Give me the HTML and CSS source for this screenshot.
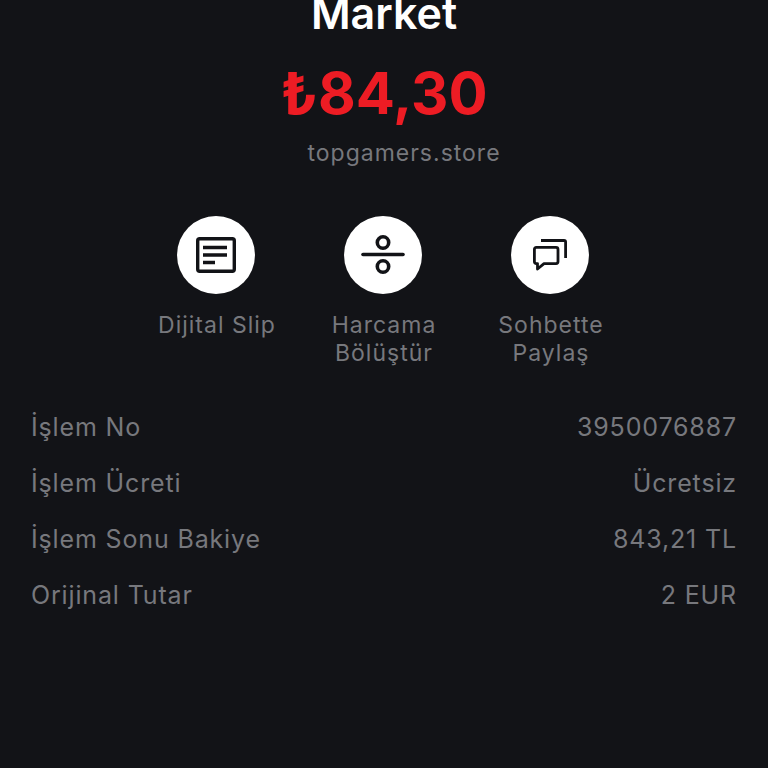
FILE: index.html
```html
<!DOCTYPE html>
<html lang="en">

<head>
    <meta charset="UTF-8">
    <meta name="viewport" content="width=device-width, initial-scale=1.0">
    <title>İşlem Detayı</title>
    <link rel="stylesheet" href="styles.css">
</head>

<body>

<div class="summary">
    <h1 class="title">Market</h1>
    <div class="amount">₺84,30</div>
    <div class="site">topgamers.store</div>
</div>

<div class="actions">
    <div class="action">
        <div class="circle">
            <svg width="40" height="36" viewBox="0 0 40 36" fill="none" stroke="#121317" stroke-width="3.4">
                <rect x="1.7" y="1.7" width="36.6" height="32.6" rx="2"/>
                <path d="M7 10.5H31M7 18H31M7 25.5H19"/>
            </svg>
        </div>
        <div class="label">Dijital Slip</div>
    </div>
    <div class="action">
        <div class="circle">
            <svg width="44" height="40" viewBox="0 0 44 40" fill="none" stroke="#121317" stroke-width="3.6">
                <circle cx="22" cy="7.5" r="5.7"/>
                <path d="M2 19.5H42" stroke-linecap="round"/>
                <circle cx="22" cy="31.5" r="5.7"/>
            </svg>
        </div>
        <div class="label">Harcama<br>Bölüştür</div>
    </div>
    <div class="action">
        <div class="circle">
            <svg width="34" height="32" viewBox="0 0 34 32" fill="none" stroke="#121317" stroke-width="2.8" stroke-linejoin="round">
                <path d="M8 1.5H31Q32.6 1.5 32.6 3V19"/>
                <path d="M3.4 8.4H23Q25 8.4 25 10.4V22.6Q25 24.6 23 24.6H11L4.5 30V24.6H3.4Q1.4 24.6 1.4 22.6V10.4Q1.4 8.4 3.4 8.4Z"/>
            </svg>
        </div>
        <div class="label">Sohbette<br>Paylaş</div>
    </div>
</div>

<div class="details">
    <div class="row"><span>İşlem No</span><span>3950076887</span></div>
    <div class="row"><span>İşlem Ücreti</span><span>Ücretsiz</span></div>
    <div class="row"><span>İşlem Sonu Bakiye</span><span>843,21 TL</span></div>
    <div class="row"><span>Orijinal Tutar</span><span>2 EUR</span></div>
</div>

</body>

</html>
```

FILE: styles.css
```css
html, body {
    margin: 0;
    padding: 0;
    height: 100%;
    overflow: hidden;
}

body {
    background-color: #121317;
    font-family: Inter, "Noto Sans", sans-serif;
    color: #77787d;
}

.summary {
    display: flex;
    flex-direction: column;
    align-items: center;
    margin-top: -12px;
}

.title {
    margin: 0;
    font-size: 43px;
    line-height: 50px;
    font-weight: 600;
    color: #ffffff;
}

.amount {
    margin-top: 24px;
    font-size: 58px;
    line-height: 62px;
    font-weight: 700;
    color: #ed1c24;
}

.site {
    margin-top: 14px;
    padding-left: 40px;
    font-size: 23px;
    line-height: 30px;
    letter-spacing: 1px;
}

.actions {
    display: grid;
    grid-template-columns: repeat(3, 167px);
    justify-content: center;
    margin-top: 48px;
    padding-right: 2px;
}

.action {
    display: flex;
    flex-direction: column;
    align-items: center;
}

.circle {
    width: 78px;
    height: 78px;
    border-radius: 50%;
    background-color: #ffffff;
    display: flex;
    align-items: center;
    justify-content: center;
}

.label {
    margin-top: 17px;
    padding-left: 2px;
    font-size: 23px;
    line-height: 28px;
    text-align: center;
    letter-spacing: 1px;
}

.details {
    margin-top: 32px;
    padding: 0 31px 0 31px;
}

.row {
    display: flex;
    justify-content: space-between;
    height: 56px;
    align-items: center;
    font-size: 25px;
    letter-spacing: 0.85px;
}
```
